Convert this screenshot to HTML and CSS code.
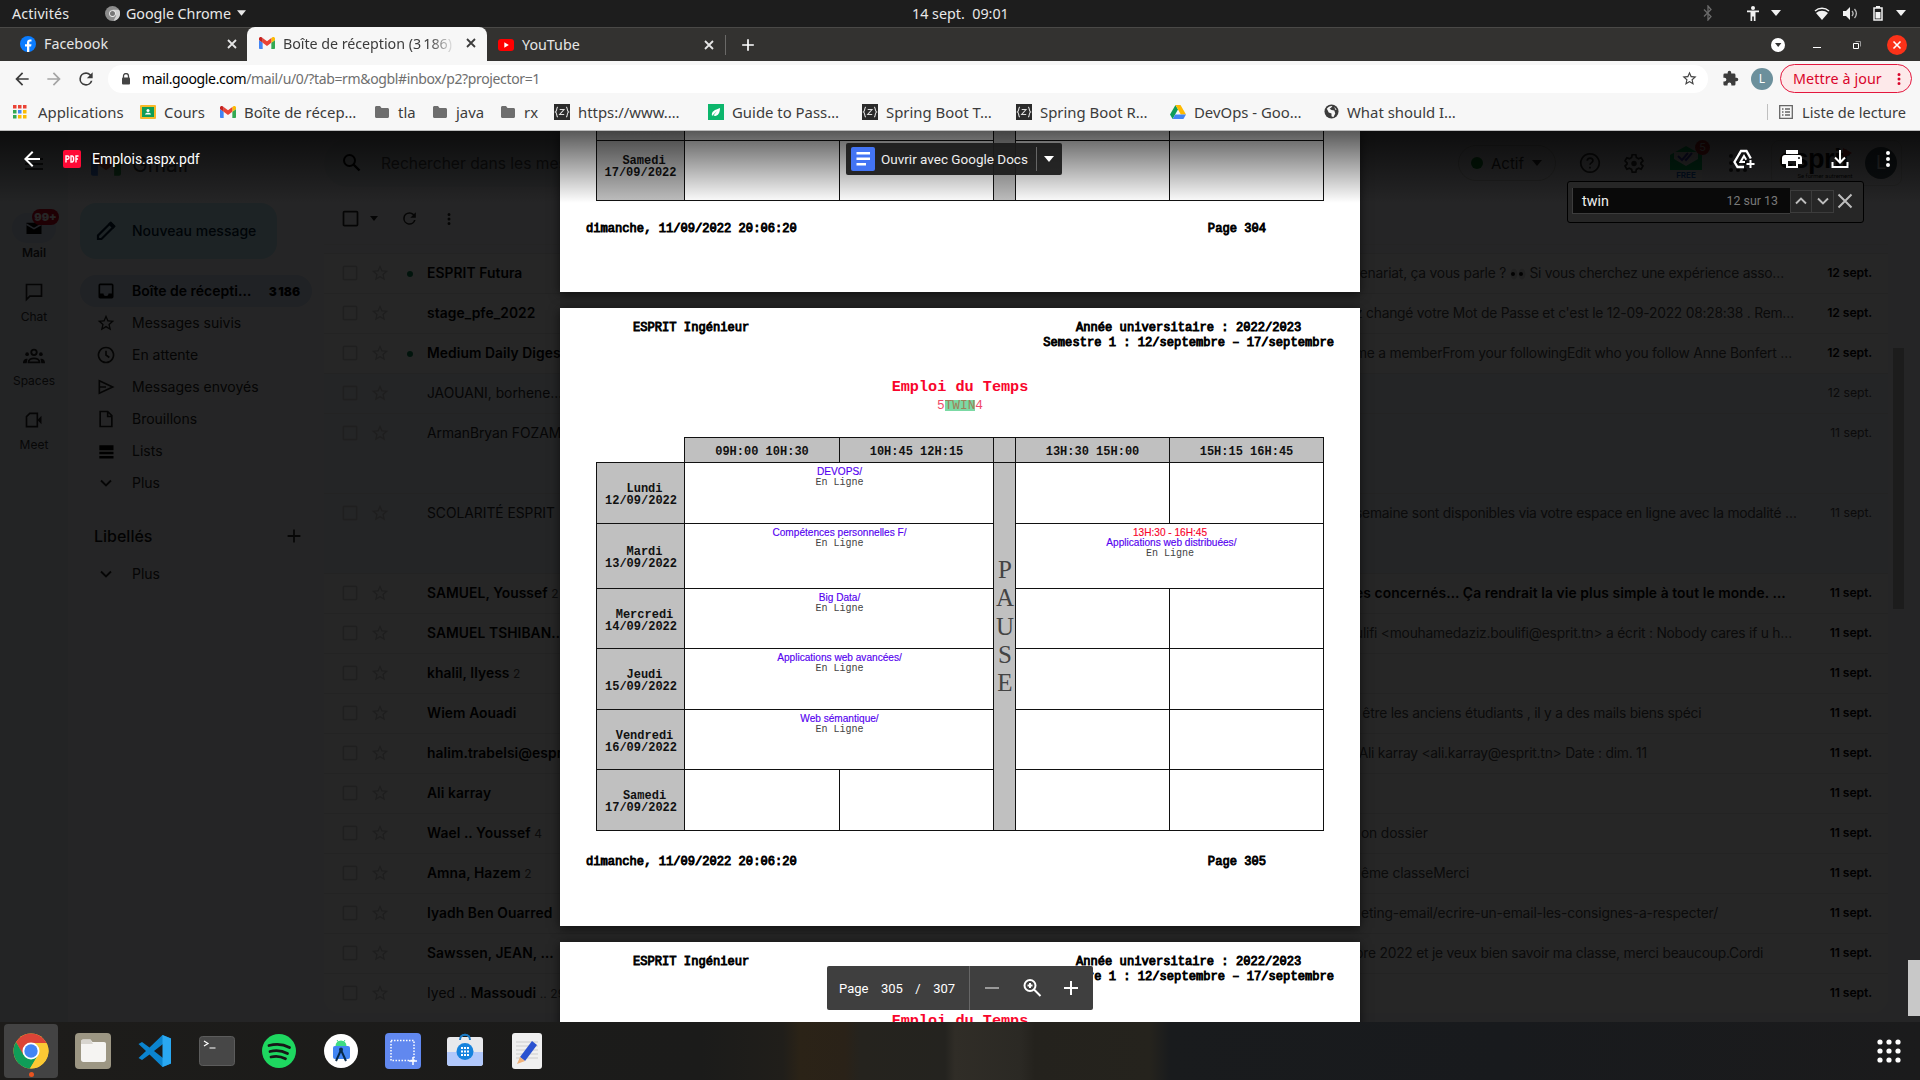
FILE: index.html
```html
<!DOCTYPE html>
<html lang="fr">
<head>
<meta charset="utf-8">
<title>Boîte de réception (3 186)</title>
<link rel="stylesheet" href="styles.css">
</head>
<body>
<svg class="sprite" width="0" height="0">
  <symbol id="gmail" viewBox="0 0 24 18"><path fill="#4285f4" d="M1.6 18H5.500V8.700L0 4.500v11.900C0 17.300.7 18 1.600 18z"/><path fill="#34a853" d="M18.500 18h3.900c.9 0 1.600-.7 1.600-1.600V4.500l-5.500 4.200z"/><path fill="#fbbc04" d="M18.500 1.600v7.100L24 4.500V2.400C24 .4 21.700-.7 20.100.5z"/><path fill="#ea4335" d="M5.500 8.700V1.600L12 6.500l6.500-4.900v7.100L12 13.600z"/><path fill="#c5221f" d="M0 2.400v2.100l5.500 4.200V1.600L3.900.5C2.300-.7 0 .4 0 2.400z"/></symbol>
  <symbol id="x" viewBox="0 0 16 16"><path d="M4 4l8 8M12 4l-8 8" fill="none" stroke="currentColor" stroke-width="1.8"/></symbol>
  <symbol id="folder" viewBox="0 0 16 16"><path fill="currentColor" d="M1 3.500C1 2.600 1.600 2 2.500 2H6l1.500 2h6c.9 0 1.500.6 1.500 1.500v7c0 .9-.6 1.500-1.500 1.500h-11C1.600 14 1 13.400 1 12.500z"/></symbol>
  <symbol id="zed" viewBox="0 0 16 16"><path fill="#2b2b2b" d="M0 0h16v16H0z"/><path d="M4 3C2 3 3.500 7 1.500 8 3.500 9 2 13 4 13M12 3c2 0 .5 4 2.500 5-2 1-.5 5-2.500 5M5.700 5.500h4.300l-4.300 5h4.500" fill="none" stroke="#ddd" stroke-width="1.100"/></symbol>
  <symbol id="caret" viewBox="0 0 10 6"><path fill="currentColor" d="M0 0h10L5 6z"/></symbol>
  <symbol id="arrow" viewBox="0 0 24 24"><path fill="currentColor" d="M20 11H7.830l5.590-5.590L12 4l-8 8 8 8 1.410-1.410L7.830 13H20v-2z"/></symbol>
  <symbol id="reload" viewBox="0 0 24 24"><path fill="currentColor" d="M17.650 6.350A7.950 7.950 0 0 0 12 4a8 8 0 1 0 7.730 10h-2.080A6 6 0 1 1 12 6c1.660 0 3.140.69 4.220 1.780L13 11h7V4z"/></symbol>
  <symbol id="star" viewBox="0 0 24 24"><path fill="currentColor" d="M22 9.240l-7.190-.62L12 2 9.190 8.630 2 9.240l5.460 4.730L5.820 21 12 17.270 18.180 21l-1.630-7.030zM12 15.400l-3.760 2.270 1-4.280-3.320-2.880 4.380-.38L12 6.100l1.710 4.040 4.380.38-3.320 2.880 1 4.280z"/></symbol>
  <symbol id="more" viewBox="0 0 24 24"><path fill="currentColor" d="M12 8a2 2 0 1 0 0-4 2 2 0 0 0 0 4zm0 2a2 2 0 1 0 0 4 2 2 0 0 0 0-4zm0 6a2 2 0 1 0 0 4 2 2 0 0 0 0-4z"/></symbol>
  <symbol id="box" viewBox="0 0 24 24"><path fill="currentColor" d="M19 5v14H5V5zm0-2H5a2 2 0 0 0-2 2v14c0 1.100.9 2 2 2h14a2 2 0 0 0 2-2V5a2 2 0 0 0-2-2z"/></symbol>
  <symbol id="down" viewBox="0 0 24 24"><path d="M6 9l6 6 6-6" fill="none" stroke="currentColor" stroke-width="2.300"/></symbol>
  <symbol id="plus" viewBox="0 0 24 24"><path d="M12 5v14M5 12h14" fill="none" stroke="currentColor" stroke-width="2"/></symbol>
</svg>

<header class="panel">
  <span class="activities">Activités</span>
  <span class="app-menu">
    <svg width="15" height="15" viewBox="0 0 16 16"><circle cx="8" cy="8" r="8" fill="#8c8c8c"/><path d="M8 4h7a8 8 0 0 1-6 12l3-6z" fill="#d0d0d0"/><circle cx="8" cy="8" r="3.600" fill="#eee"/><circle cx="8" cy="8" r="2.700" fill="#777"/></svg>
    Google Chrome <svg width="9" height="6"><use href="#caret"/></svg>
  </span>
  <span class="clock">14 sept.&nbsp; 09:01</span>
  <span class="indicators">
    <svg width="10" height="16" viewBox="0 0 10 16"><path d="M1 4.500l7 7L5 15V1l3 3.500-7 7" fill="none" stroke="#6b6b6b" stroke-width="1.300"/></svg>
    <svg class="i-access" width="12" height="15" viewBox="0 0 12 15"><circle cx="6" cy="2" r="2" fill="#f2f2f2"/><path fill="#f2f2f2" d="M0 4.500h12v1.700H8.500V15H6.800v-4.500H5.200V15H3.500V6.200H0z"/></svg>
    <svg class="i-c1" width="10" height="6"><use href="#caret"/></svg>
    <svg class="i-wifi" width="16" height="13" viewBox="0 0 16 13"><path d="M1 4a10.500 10.500 0 0 1 14 0" fill="none" stroke="#f2f2f2" stroke-width="1.500"/><path fill="#f2f2f2" d="M2 6a9 9 0 0 1 12 0l-6 7z"/></svg>
    <svg class="i-vol" width="15" height="13" viewBox="0 0 15 13"><path fill="#f2f2f2" d="M0 4h3l4-4v13L3 9H0z"/><path d="M9 4c1.300 1.500 1.300 3.500 0 5M11.500 2c2.500 3 2.500 6 0 9" fill="none" stroke="#bbb" stroke-width="1.300"/></svg>
    <svg class="i-bat" width="10" height="15" viewBox="0 0 10 15"><path d="M1 2h8v12H1z" fill="none" stroke="#f2f2f2" stroke-width="1.500"/><path fill="#f2f2f2" d="M3 0h4v2H3zM2.500 6h5v6.500h-5z"/></svg>
    <svg class="i-c2" width="10" height="6"><use href="#caret"/></svg>
  </span>
</header>

<nav class="tabs">
  <div class="tab tab-fb"><svg width="16" height="16" viewBox="0 0 16 16"><circle cx="8" cy="8" r="8" fill="#0a7cff"/><path fill="#fff" d="M7 16v-5.500H5V8.200h2V6.500C7 4.500 8.200 3.400 10 3.400l1.500.1v2h-1c-.9 0-1.200.5-1.200 1.200v1.500h2.200l-.4 2.300H9.300V16z"/></svg><span>Facebook</span><svg class="close" width="16" height="16"><use href="#x"/></svg></div>
  <div class="tab tab-active"><svg width="16" height="12"><use href="#gmail"/></svg><span>Boîte de réception (3&#8239;186)</span><svg class="close" width="16" height="16"><use href="#x"/></svg></div>
  <div class="tab tab-yt"><svg width="16" height="12" viewBox="0 0 16 12"><rect width="16" height="12" rx="3" fill="#f00"/><path fill="#fff" d="M6.300 3.300v5.400L10.800 6z"/></svg><span>YouTube</span><svg class="close" width="16" height="16"><use href="#x"/></svg></div>
  <svg class="newtab" width="20" height="20"><use href="#plus"/></svg>
  <div class="winctl">
    <svg width="14" height="14" viewBox="0 0 14 14"><circle cx="7" cy="7" r="7" fill="#fff"/><path d="M4 5h6.400L7.200 9z" fill="#333"/></svg>
    <svg width="8" height="14" viewBox="0 0 8 14"><path fill="#fff" d="M0 9h8v1H0z"/></svg>
    <svg width="8" height="8" viewBox="0 0 8 8"><path d="M.5 2.500h5v5h-5z" fill="none" stroke="#fff"/><path d="M2.500.5h5v5" fill="none" stroke="#999"/></svg>
    <svg width="20" height="20" viewBox="0 0 20 20"><circle cx="10" cy="10" r="10" fill="#fb3219"/><path d="M6.500 6.500l7 7M13.500 6.500l-7 7" stroke="#fff" stroke-width="1.600"/></svg>
  </div>
</nav>

<div class="toolbar">
  <div class="navbtns"><svg width="20" height="20"><use href="#arrow"/></svg><svg class="fwd" width="20" height="20"><use href="#arrow"/></svg><svg width="20" height="20"><use href="#reload"/></svg></div>
  <div class="omnibox"><svg width="10" height="12" viewBox="0 0 10 12"><path d="M2.500 5V3a2.500 2.500 0 0 1 5 0v2" fill="none" stroke="#444" stroke-width="1.300"/><rect x="1" y="4.500" width="8" height="7" rx="1" fill="#444"/></svg><span class="url">mail.google.com<i>/mail/u/0/?tab=rm&amp;ogbl#inbox/p2?projector=1</i></span><svg width="17" height="17"><use href="#star"/></svg></div>
  <svg class="ext" width="17" height="17" viewBox="0 0 24 24"><path fill="#3c3c3c" d="M20.500 11H19V7a2 2 0 0 0-2-2h-4V3.500a2.500 2.500 0 0 0-5 0V5H4a2 2 0 0 0-2 2v3.800h1.500a2.700 2.700 0 0 1 0 5.400H2V20c0 1.100.9 2 2 2h3.800v-1.500a2.700 2.700 0 0 1 5.400 0V22H17a2 2 0 0 0 2-2v-4h1.500a2.500 2.500 0 0 0 0-5z"/></svg>
  <span class="profile">L</span>
  <span class="update">Mettre à jour <svg width="18" height="20"><use href="#more"/></svg></span>
</div>

<div class="bookmarks">
  <span><svg width="14" height="14" viewBox="0 0 14 14"><path fill="#ea4335" d="M0 0h3.500v3.500H0zM5 0h3.500v3.500H5zM10 0h3.500v3.500H10z"/><path fill="#34a853" d="M0 5h3.500v3.500H0zM0 10h3.500v3.500H0z"/><path fill="#4285f4" d="M5 5h3.500v3.500H5z"/><path fill="#fbbc04" d="M10 5h3.500v3.500H10zM5 10h3.500v3.500H5zM10 10h3.500v3.500H10z"/></svg>Applications</span>
  <span><svg width="16" height="14" viewBox="0 0 16 14"><rect width="16" height="14" rx="1" fill="#f7b928"/><path fill="#0f9d58" d="M2 2h12v10H2z"/><circle cx="8" cy="5.500" r="1.500" fill="#fff"/><path fill="#fff" d="M5 9.500c0-2.200 6-2.200 6 0z"/></svg>Cours</span>
  <span><svg width="16" height="12"><use href="#gmail"/></svg>Boîte de récep…</span>
  <span><svg class="fold" width="16" height="16"><use href="#folder"/></svg>tla</span>
  <span><svg class="fold" width="16" height="16"><use href="#folder"/></svg>java</span>
  <span><svg class="fold" width="16" height="16"><use href="#folder"/></svg>rx</span>
  <span><svg width="16" height="16"><use href="#zed"/></svg>https://www.…</span>
  <span><svg width="16" height="16" viewBox="0 0 16 16"><path fill="#0cb66c" d="M0 0h16v16H0z"/><path fill="#fff" d="M4 12c-1-5 3-6 8-8 0 6-3 9-6.500 7.500L9 7z"/></svg>Guide to Pass…</span>
  <span><svg width="16" height="16"><use href="#zed"/></svg>Spring Boot T…</span>
  <span><svg width="16" height="16"><use href="#zed"/></svg>Spring Boot R…</span>
  <span><svg width="16" height="14" viewBox="0 0 16 14"><path fill="#0f9d58" d="M5.500 0L0 9.500 2.600 14 8 4.500z"/><path fill="#ffba00" d="M5.500 0h5L16 9.500h-5.200z"/><path fill="#4285f4" d="M2.600 14l2.700-4.500H16L13.400 14z"/></svg>DevOps - Goo…</span>
  <span><svg width="15" height="15" viewBox="0 0 16 16"><circle cx="8" cy="8" r="7.500" fill="#3c3c3c"/><path fill="#f7f7f7" d="M3 5c2-3 5-3 6-3L7.500 4 6 5l2 1.500 3 .5 1 3-2 4-2-1V10L5 9 4 7zM11 3l2.500 3L12 6z"/></svg>What should I…</span>
  <span class="readlist"><svg width="14" height="14" viewBox="0 0 14 14"><path d="M.7.700h12.600v12.600H.7z" fill="none" stroke="#666" stroke-width="1.300"/><path d="M3 4h1.500M3 7h1.500M3 10h1.500M6 4h5M6 7h5M6 10h5" stroke="#666" stroke-width="1.400"/></svg>Liste de lecture</span>
</div>

<main class="view">
  <div class="mail">
    <div class="rail">
      <div class="rail-item on"><span class="ic"><svg width="18" height="18" viewBox="0 0 24 24"><path fill="currentColor" d="M2 5h20v15H2z"/><path d="M2 7l10 6 10-6" fill="none" stroke="#d3e3fd" stroke-width="2"/></svg><b class="badge">99+</b></span>Mail</div>
      <div class="rail-item"><span class="ic"><svg width="20" height="20" viewBox="0 0 24 24"><path d="M3 21V3h18v14H7z" fill="none" stroke="currentColor" stroke-width="2"/></svg></span>Chat</div>
      <div class="rail-item"><span class="ic"><svg width="22" height="20" viewBox="0 0 24 20"><g fill="none" stroke="currentColor" stroke-width="2"><circle cx="12" cy="6" r="3"/><path d="M6 17c0-6 12-6 12 0z"/></g><circle cx="4.500" cy="8" r="2" fill="currentColor"/><circle cx="19.500" cy="8" r="2" fill="currentColor"/><path fill="currentColor" d="M0 18c0-3 1-5 5-5l-1 5zM24 18c0-3-1-5-5-5l1 5z"/></svg></span>Spaces</div>
      <div class="rail-item"><span class="ic"><svg width="20" height="20" viewBox="0 0 24 24"><path d="M3 8l4-4h9v16H3z" fill="none" stroke="currentColor" stroke-width="2"/><path fill="currentColor" d="M16 12l5-5v10z"/></svg></span>Meet</div>
    </div>

    <div class="side">
      <div class="brand"><svg class="burger" width="18" height="12"><path fill="#444" d="M0 0h18v2H0zM0 5h18v2H0zM0 10h18v2H0z"/></svg><svg width="30" height="23"><use href="#gmail"/></svg><span>Gmail</span></div>
      <div class="compose"><svg width="24" height="24" viewBox="0 0 24 24"><path d="M4 20v-3.500L16.500 4 20 7.500 7.500 20z" fill="none" stroke="currentColor" stroke-width="2.200"/><path fill="currentColor" d="M14 5l3-2.500L21.500 7 19 10z"/></svg>Nouveau message</div>
      <ul class="folders">
        <li class="on"><svg width="20" height="20" viewBox="0 0 24 24"><path fill="currentColor" d="M19 3H5a2 2 0 0 0-2 2v14c0 1.100.9 2 2 2h14a2 2 0 0 0 2-2V5a2 2 0 0 0-2-2zm0 12h-4a3 3 0 0 1-6 0H5V5h14z"/></svg><span>Boîte de récepti…</span><b>3&#8239;186</b></li>
        <li><svg width="20" height="20"><use href="#star"/></svg><span>Messages suivis</span></li>
        <li><svg width="20" height="20" viewBox="0 0 24 24"><path d="M12 3a9 9 0 1 0 .01 0zM12 7v5l4 3" fill="none" stroke="currentColor" stroke-width="2"/></svg><span>En attente</span></li>
        <li><svg width="20" height="20" viewBox="0 0 24 24"><path d="M4 4.500L20 12 4 19.500zM4 12h8" fill="none" stroke="currentColor" stroke-width="2"/></svg><span>Messages envoyés</span></li>
        <li><svg width="20" height="20" viewBox="0 0 24 24"><path d="M5 3h9l5 5v13H5zM14 3v6h5" fill="none" stroke="currentColor" stroke-width="2"/></svg><span>Brouillons</span></li>
        <li><svg width="20" height="20" viewBox="0 0 24 24"><path fill="#000" d="M4 5h17v6H4zM4 13h17v3H4zM4 18h17v3H4z"/></svg><span>Lists</span></li>
        <li><svg width="20" height="20"><use href="#down"/></svg><span>Plus</span></li>
      </ul>
      <div class="labels"><span>Libellés</span><svg width="22" height="22"><use href="#plus"/></svg></div>
      <ul class="folders"><li><svg width="20" height="20"><use href="#down"/></svg><span>Plus</span></li></ul>
    </div>

    <div class="content">
      <div class="topline">
        <div class="search"><svg width="24" height="24" viewBox="0 0 24 24"><circle cx="9.500" cy="9.500" r="5.500" fill="none" stroke="currentColor" stroke-width="2"/><path d="M13.500 13.500l6 6" stroke="currentColor" stroke-width="2.400"/></svg><span>Rechercher dans les messages</span></div>
        <div class="status"><i></i>Actif<svg width="10" height="6"><use href="#caret"/></svg></div>
        <svg class="help" width="22" height="22" viewBox="0 0 24 24"><path d="M12 2a10 10 0 1 0 .01 0zM9 9.500c0-4 6.200-3.500 6.200 0 0 2-3.200 2.200-3.200 4.500M12 16v2" fill="none" stroke="currentColor" stroke-width="1.900"/></svg>
        <svg class="gear" width="22" height="22" viewBox="0 0 24 24"><path d="M10 3h4l.6 3 2.400 1.300 2.800-1 2 3.400-2.200 2.100v1.400l2.200 2.100-2 3.400-2.800-1-2.400 1.300-.6 3h-4l-.6-3L7 17.700l-2.800 1-2-3.400 2.200-2.100v-1.400L2.200 9.700l2-3.400 2.800 1L9.400 6z" fill="none" stroke="currentColor" stroke-width="1.900"/><circle cx="12" cy="12.500" r="3" fill="currentColor"/></svg>
        <div class="tracker"><svg width="32" height="24" viewBox="0 0 32 24"><path fill="#0c6" d="M0 9L16 0l16 9v15H0z"/><path fill="#fff" d="M4 6h24v7l-12 7-12-7z"/><path d="M8 10l4 4 6-7M15 13l1 1 6-7" fill="none" stroke="#44c" stroke-width="2"/></svg><b>FREE</b><em>5</em></div>
        <svg class="apps" width="20" height="20" viewBox="0 0 20 20"><g fill="currentColor"><circle cx="3" cy="3" r="2"/><circle cx="10" cy="3" r="2"/><circle cx="17" cy="3" r="2"/><circle cx="3" cy="10" r="2"/><circle cx="10" cy="10" r="2"/><circle cx="17" cy="10" r="2"/><circle cx="3" cy="17" r="2"/><circle cx="10" cy="17" r="2"/><circle cx="17" cy="17" r="2"/></g></svg>
        <div class="org"><span class="logo">esprit<s></s><small>Se former autrement</small></span><span class="me">L</span></div>
      </div>
      <div class="listbar"><svg width="21" height="21"><use href="#box"/></svg><svg class="c" width="8" height="5"><use href="#caret"/></svg><svg class="r" width="19" height="19"><use href="#reload"/></svg><svg class="m" width="18" height="18"><use href="#more"/></svg><span>51–100 sur 1577</span></div>
      <div class="rows">
        <div class="row new"><svg class="k"><use href="#box"/></svg><svg class="s"><use href="#star"/></svg><i></i><b>ESPRIT Futura</b><p>renariat, ça vous parle ? <svg width="16" height="12" viewBox="0 0 16 12"><ellipse cx="4" cy="6" rx="3.500" ry="5.500" fill="#ddd"/><ellipse cx="12" cy="6" rx="3.500" ry="5.500" fill="#ddd"/><circle cx="3" cy="6" r="2" fill="#111"/><circle cx="11" cy="6" r="2" fill="#111"/></svg> Si vous cherchez une expérience asso…</p><time>12 sept.</time></div>
        <div class="row"><svg class="k"><use href="#box"/></svg><svg class="s"><use href="#star"/></svg><i></i><b>stage_pfe_2022</b><p>z changé votre Mot de Passe et c'est le 12-09-2022 08:28:38 . Rem…</p><time>12 sept.</time></div>
        <div class="row new"><svg class="k"><use href="#box"/></svg><svg class="s"><use href="#star"/></svg><i></i><b>Medium Daily Digest</b><p>me a memberFrom your followingEdit who you follow Anne Bonfert …</p><time>12 sept.</time></div>
        <div class="row read"><svg class="k"><use href="#box"/></svg><svg class="s"><use href="#star"/></svg><i></i><b>JAOUANI, borhene…</b><p></p><time>12 sept.</time></div>
        <div class="row read tall"><svg class="k"><use href="#box"/></svg><svg class="s"><use href="#star"/></svg><i></i><b>ArmanBryan FOZAM…</b><p></p><time>11 sept.</time></div>
        <div class="row read tall"><svg class="k"><use href="#box"/></svg><svg class="s"><use href="#star"/></svg><i></i><b>SCOLARITÉ ESPRIT</b><p>semaine sont disponibles via votre espace en ligne avec la modalité …</p><time>11 sept.</time></div>
        <div class="row"><svg class="k"><use href="#box"/></svg><svg class="s"><use href="#star"/></svg><i></i><b>SAMUEL, Youssef <u>2</u></b><p class="strong">es concernés… Ça rendrait la vie plus simple à tout le monde. …</p><time>11 sept.</time></div>
        <div class="row"><svg class="k"><use href="#box"/></svg><svg class="s"><use href="#star"/></svg><i></i><b>SAMUEL TSHIBAN…</b><p>ulifi &lt;mouhamedaziz.boulifi@esprit.tn&gt; a écrit : Nobody cares if u h…</p><time>11 sept.</time></div>
        <div class="row"><svg class="k"><use href="#box"/></svg><svg class="s"><use href="#star"/></svg><i></i><b>khalil, Ilyess <u>2</u></b><p></p><time>11 sept.</time></div>
        <div class="row"><svg class="k"><use href="#box"/></svg><svg class="s"><use href="#star"/></svg><i></i><b>Wiem Aouadi</b><p>&nbsp; être les anciens étudiants , il y a des mails biens spéci</p><time>11 sept.</time></div>
        <div class="row"><svg class="k"><use href="#box"/></svg><svg class="s"><use href="#star"/></svg><i></i><b>halim.trabelsi@esprit</b><p>&nbsp;Ali karray &lt;ali.karray@esprit.tn&gt; Date : dim. 11</p><time>11 sept.</time></div>
        <div class="row"><svg class="k"><use href="#box"/></svg><svg class="s"><use href="#star"/></svg><i></i><b>Ali karray</b><p></p><time>11 sept.</time></div>
        <div class="row"><svg class="k"><use href="#box"/></svg><svg class="s"><use href="#star"/></svg><i></i><b>Wael .. Youssef <u>4</u></b><p class="in">on dossier</p><time>11 sept.</time></div>
        <div class="row"><svg class="k"><use href="#box"/></svg><svg class="s"><use href="#star"/></svg><i></i><b>Amna, Hazem <u>2</u></b><p class="in">ême classeMerci</p><time>11 sept.</time></div>
        <div class="row"><svg class="k"><use href="#box"/></svg><svg class="s"><use href="#star"/></svg><i></i><b>Iyadh Ben Ouarred</b><p class="in">eting-email/ecrire-un-email-les-consignes-a-respecter/</p><time>11 sept.</time></div>
        <div class="row"><svg class="k"><use href="#box"/></svg><svg class="s"><use href="#star"/></svg><i></i><b>Sawssen, JEAN, …</b><p>bre 2022 et je veux bien savoir ma classe, merci beaucoup.Cordi</p><time>11 sept.</time></div>
        <div class="row"><svg class="k"><use href="#box"/></svg><svg class="s"><use href="#star"/></svg><i></i><b><span>Iyed ..</span> Massoudi <u>.. 29</u></b><p></p><time>11 sept.</time></div>
      </div>
    </div>
    <div class="innerscroll"></div>
    <div class="scrim"></div>
  </div>

  <div class="viewer">
    <div class="pages">
      <section class="page first">
        <div class="grid stub">
          <div class="day"></div><div class="w2"></div><div class="pause"></div><div></div><div></div>
          <div class="day"><span>Samedi</span>17/09/2022</div><div></div><div></div><div></div><div></div>
        </div>
        <footer><span>dimanche, 11/09/2022 20:06:20</span><span>Page 304</span></footer>
      </section>
      <section class="page">
        <header><span>ESPRIT Ingénieur</span><span class="year">Année universitaire : 2022/2023<br>Semestre 1 : 12/septembre – 17/septembre</span></header>
        <h1>Emploi du Temps</h1>
        <h2>5<mark>TWIN</mark>4</h2>
        <div class="grid full">
          <div class="none"></div><div class="hr">09H:00 10H:30</div><div class="hr">10H:45 12H:15</div><div class="hr"></div><div class="hr">13H:30 15H:00</div><div class="hr">15H:15 16H:45</div>
          <div class="day"><span>Lundi</span>12/09/2022</div><div class="w2"><a>DEVOPS/</a>En Ligne</div><div class="pause">P<br>A<br>U<br>S<br>E</div><div></div><div></div>
          <div class="day"><span>Mardi</span>13/09/2022</div><div class="w2"><a>Compétences personnelles F/</a>En Ligne</div><div class="w2"><em>13H:30 - 16H:45</em><a>&nbsp;Applications web distribuées/</a>En Ligne</div>
          <div class="day"><span>Mercredi</span>14/09/2022</div><div class="w2"><a>Big Data/</a>En Ligne</div><div></div><div></div>
          <div class="day"><span>Jeudi</span>15/09/2022</div><div class="w2"><a>Applications web avancées/</a>En Ligne</div><div></div><div></div>
          <div class="day"><span>Vendredi</span>16/09/2022</div><div class="w2"><a>Web sémantique/</a>En Ligne</div><div></div><div></div>
          <div class="day"><span>Samedi</span>17/09/2022</div><div></div><div></div><div></div><div></div>
        </div>
        <footer><span>dimanche, 11/09/2022 20:06:20</span><span>Page 305</span></footer>
      </section>
      <section class="page">
        <header><span>ESPRIT Ingénieur</span><span class="year">Année universitaire : 2022/2023<br>Semestre 1 : 12/septembre – 17/septembre</span></header>
        <h1>Emploi du Temps</h1>
      </section>
    </div>

    <div class="vhead">
      <svg class="back" width="24" height="24"><use href="#arrow"/></svg>
      <svg class="pdf" width="18" height="18" viewBox="0 0 18 18"><rect width="18" height="18" rx="2" fill="#ff0a36"/><path d="M3 12.500V6h1.500c2 0 2 3.200 0 3.200H3M8 6v6h1c2.200 0 2.200-6 0-6zM13 12.500V6h2.500M13 9h2" fill="none" stroke="#fff" stroke-width="1.400"/></svg>
      <span class="fname">Emplois.aspx.pdf</span>
      <div class="acts">
        <svg width="24" height="24" viewBox="0 0 24 24"><path d="M12 20H5.500L2.500 15 9 4h5.500l4.300 7.500" fill="none" stroke="#fff" stroke-width="2.300"/><path d="M13 15H8.500L12 9l2.200 3.700M18.500 13v8M14.500 17h8" fill="none" stroke="#fff" stroke-width="2"/></svg>
        <svg width="24" height="24" viewBox="0 0 24 24"><path fill="#fff" d="M19 8H5c-1.700 0-3 1.300-3 3v6h4v4h12v-4h4v-6c0-1.700-1.300-3-3-3zm-3 11H8v-5h8zm3-7a1 1 0 1 1 0-2 1 1 0 0 1 0 2zM18 3H6v4h12z"/></svg>
        <svg width="24" height="24" viewBox="0 0 24 24"><path d="M12 3v12M7 10.500l5 5 5-5M4.500 15v5h15v-5" fill="none" stroke="#fff" stroke-width="2"/></svg>
        <svg width="24" height="24"><use href="#more"/></svg>
      </div>
    </div>

    <div class="openwith">
      <svg width="24" height="24" viewBox="0 0 24 24"><rect width="24" height="24" rx="2" fill="#4374f4"/><path fill="#fff" d="M5.500 5H19v2.500H5.500zM5.500 10.500H19V13H5.500zM5.500 16H15v2.500H5.500z"/></svg>
      <span>Ouvrir avec Google Docs</span><svg class="car" width="10" height="6"><use href="#caret"/></svg>
    </div>

    <div class="find">
      <div class="field"><span>twin</span><span class="cnt">12 sur 13</span></div>
      <span class="fb"><svg class="up" width="20" height="20"><use href="#down"/></svg></span><span class="fb"><svg width="20" height="20"><use href="#down"/></svg></span>
      <svg class="fx" width="16" height="16" viewBox="0 0 16 16"><path d="M1.500 1.500l13 13M14.500 1.500l-13 13" stroke="#bdbdbd" stroke-width="2"/></svg>
    </div>

    <div class="pager">
      <div class="pg"><span>Page</span><span>305</span><span>/</span><span>307</span></div>
      <div class="zm"><svg width="14" height="2"><path fill="#999" d="M0 0h14v2H0z"/></svg>
      <svg width="20" height="20" viewBox="0 0 20 20"><circle cx="8" cy="7.500" r="5.500" fill="none" stroke="#fff" stroke-width="2"/><path d="M12 11.500l6.500 6.500M8 5v5M5.500 7.500h5" stroke="#fff" stroke-width="2"/></svg>
      <svg width="14" height="14"><path fill="#fff" d="M6 0h2v14H6zM0 6h14v2H0z"/></svg></div>
    </div>
    <div class="outerscroll"></div>
  </div>
</main>

<footer class="dock">
  <div class="app on"><svg width="36" height="36" viewBox="0 0 36 36"><circle cx="18" cy="18" r="17.500" fill="#fbc934"/><path fill="#db4437" d="M18 18h16.800L33 9A17.500 17.500 0 0 0 3 9l7 13z"/><path fill="#0f9d58" d="M3 9a17.500 17.500 0 0 0 14 26.500L26 21l-8-2-7.500 3z"/><path fill="#fbc934" d="M18 10h15.500A17.500 17.500 0 0 1 17 35.500L25.500 21z"/><circle cx="18" cy="18" r="8.500" fill="#fff"/><circle cx="18" cy="18" r="6.700" fill="#4285f4"/></svg></div>
  <div class="app"><svg width="36" height="36" viewBox="0 0 36 36"><rect width="36" height="36" rx="4" fill="#9c9683"/><path fill="#f5f4f2" d="M6 9c0-1.500 1-2.500 2.500-2.500h7L17.500 9H29c1.300 0 2 .8 2 2v15.500c0 1.600-1 2.500-2.500 2.500h-20C7 29 6 28 6 26.500z"/><path fill="#d8d5cf" d="M6 11V8.500C6 7 7 6.500 8 6.500h7.500L18 11z"/></svg></div>
  <div class="app"><svg width="36" height="36" viewBox="0 0 36 36"><path fill="#0b84cf" d="M25.500 2L34 5.500v25L25.500 34 12.500 21.500 5 27l-3.500-2L9 18 1.500 11 5 9l7.500 5.500z"/><path fill="#1b1b1b" d="M26 11v14l-9-7z"/><path fill="#2aa8f2" d="M25.500 2L34 5.500v25L25.500 34z"/></svg></div>
  <div class="app"><svg width="36" height="30" viewBox="0 0 36 30"><rect x=".5" y=".5" width="35" height="29" rx="3" fill="#474747" stroke="#5c5c5c"/><path d="M5 5l4 2.500L5 10M10.500 12h6" fill="none" stroke="#fff" stroke-width="1.200"/></svg></div>
  <div class="app"><svg width="34" height="36" viewBox="0 0 34 34"><circle cx="17" cy="17" r="17" fill="#1ed760"/><path d="M7 11.500c7-2 14.500-1.300 20.500 2M8 17.500c6-1.700 12-1 17.500 2M9 23c5-1.300 10-.6 14.500 1.700" fill="none" stroke="#171717" stroke-width="2.800" stroke-linecap="round"/></svg></div>
  <div class="app"><svg width="34" height="36" viewBox="0 0 34 34"><circle cx="17" cy="17" r="17" fill="#fff"/><rect x="9" y="12" width="17" height="13" rx="2" fill="#4285f4"/><path fill="#3ddc84" d="M11.500 12a5.500 5.500 0 0 1 11 0z"/><path d="M13 6l1.500 2M21 6l-1.500 2" stroke="#3ddc84"/><path d="M17 16l-5 11M17 16l5 11" fill="none" stroke="#082a4a" stroke-width="2"/><circle cx="17" cy="15.500" r="2" fill="#082a4a"/></svg></div>
  <div class="app"><svg width="36" height="36" viewBox="0 0 36 36"><rect width="36" height="36" rx="4" fill="#6188ef"/><path d="M6 7.500h23v20H6z" fill="none" stroke="#fff" stroke-width="1.500" stroke-dasharray="1.500 1.500"/><path d="M28 24v8M24 28h8" stroke="#fff" stroke-width="1.500"/></svg></div>
  <div class="app"><svg width="36" height="36" viewBox="0 0 36 36"><path d="M13 7c0-7 10-7 10 0" fill="none" stroke="#1a78c2" stroke-width="2"/><rect y="4" width="36" height="29" rx="3" fill="#e8e9ec"/><path fill="#b1c8fb" d="M0 19h36v11c0 2-1 3-3 3H3c-2 0-3-1-3-3z"/><circle cx="18" cy="18.500" r="8.500" fill="#1683dd"/><path d="M14 15h8M14 18.500h8M14 22h8" stroke="#fff" stroke-width="2" stroke-dasharray="2 1"/><path d="M13 7c0-7 10-7 10 0" fill="none" stroke="#1a78c2" stroke-width="2"/></svg></div>
  <div class="app"><svg width="30" height="36" viewBox="0 0 30 36"><rect width="30" height="36" rx="3" fill="#f0f0f0"/><path d="M4 9h22M4 13h22M4 17h22M4 21h22M4 25h22" stroke="#ccc"/><path fill="#2a52d0" d="M20 8l5 4-12 16-5-4z"/><path fill="#f1b27a" d="M8 24l5 4-8 3z"/></svg></div>
  <svg class="grid9" width="24" height="24" viewBox="0 0 24 24"><g fill="#fff"><circle cx="3" cy="3" r="2.600"/><circle cx="12" cy="3" r="2.600"/><circle cx="21" cy="3" r="2.600"/><circle cx="3" cy="12" r="2.600"/><circle cx="12" cy="12" r="2.600"/><circle cx="21" cy="12" r="2.600"/><circle cx="3" cy="21" r="2.600"/><circle cx="12" cy="21" r="2.600"/><circle cx="21" cy="21" r="2.600"/></g></svg>
</footer>
</body>
</html>
```
FILE: styles.css
```css
* { box-sizing: border-box; }
body {
  margin: 0; width: 1920px; height: 1080px; overflow: hidden;
  display: grid; grid-template-rows: 27px 34px 34px 36px 891px 58px;
  font: 14.3px "Noto Sans", sans-serif; background: #1b1b1b;
}
svg { display: block; flex: none; }
.sprite { position: absolute; }
ul { margin: 0; padding: 0; list-style: none; }

/* GNOME panel */
.panel { background: #1d1d1d; color: #e8e8e8; display: grid; grid-template-columns: 105px 806px 780px 229px; align-items: center; white-space: nowrap; padding-bottom: 1px; }
.activities { padding-left: 12px; letter-spacing: .15px; }
.app-menu { display: flex; align-items: center; gap: 6px; letter-spacing: -.05px; }
.clock { padding-left: 1px; }
.indicators { display: flex; align-items: center; color: #f2f2f2; margin-left: 12px; }
.i-access { margin-left: 34px; } .i-c1 { margin-left: 12px; } .i-wifi { margin-left: 33px; }
.i-vol { margin-left: 13px; } .i-bat { margin-left: 15px; } .i-c2 { margin-left: 13px; }

/* Tab strip */
.tabs { background: #333230; border-top: 1px solid #4a4947; display: flex; color: #e6e6e6; align-items: center; }
.tab { display: flex; align-items: center; gap: 8px; height: 34px; white-space: nowrap; padding-bottom: 2px !important; }
.tab .close { margin-left: auto; }
.tab-fb { width: 247px; padding: 0 7px 0 20px; }
.tab-active { position: relative; width: 240px; padding: 0 8px 0 12px; background: #f7f7f7; color: #3c3c3c; border-radius: 8px 8px 0 0; align-self: flex-start; margin-top: -1px; }
.tab-active span { width: 174px; overflow: hidden; -webkit-mask-image: linear-gradient(90deg, #000 85%, transparent); letter-spacing: -.05px; }
.tab-yt { width: 239px; padding: 0 8px 0 11px; border-right: 1px solid #6a6967; height: 20px; padding-bottom: 0 !important; }
.newtab { margin-left: 12px; color: #fff; }
.winctl { display: flex; align-items: center; margin-left: auto; padding-right: 13px; gap: 26px; }
.winctl svg:nth-child(1) { margin-right: 2px; } .winctl svg:nth-child(2) { margin-right: 6px; }

/* Address bar */
.toolbar { background: #f7f7f7; display: flex; align-items: center; padding: 1px 0 0 12px; height: 34px; }
.navbtns { display: flex; gap: 12px; color: #3c3c3c; width: 96px; }
.navbtns svg { height: 20px; } .fwd { transform: scaleX(-1); color: #a5a5a5; }
.omnibox { width: 1600px; height: 28px; border-radius: 14px; background: #fff; display: flex; align-items: center; padding: 0 10px 0 13px; color: #444; }
.url { color: #000; margin-left: 11px; flex: 1; white-space: nowrap; font-size: 14px; letter-spacing: -.36px; }
.url i { font-style: normal; color: #6f6f6f; }
.ext { margin-left: 14px; }
.profile { width: 22px; height: 22px; border-radius: 50%; background: #6c909c; color: #fff; font-size: 12px; line-height: 22px; text-align: center; margin-left: 12px; }
.update { margin-left: 7px; width: 132px; height: 29px; border: 1px solid #e3173e; border-radius: 15px; background: #fde9ea; color: #d9042b; display: flex; align-items: center; justify-content: space-between; padding: 0 3px 0 12px; white-space: nowrap; letter-spacing: .1px; }

/* Bookmarks bar */
.bookmarks { background: #f7f7f7; border-bottom: 1px solid #bcbcbc; color: #3c3c3c; display: grid; grid-template-columns: 127px 80px 154px 58px 68px 54px 154px 154px 154px 154px 154px 443px 1fr; padding: 0 0 2px 13px; align-items: center; white-space: nowrap; font-size: 14.9px; }
.bookmarks span { display: flex; align-items: center; gap: 8px; }
.bookmarks span:first-child { gap: 11px; }
.bookmarks .fold { color: #6e6e6e; }
.bookmarks .readlist { border-left: 1px solid #c0c0c0; padding-left: 11px; height: 16px; gap: 9px; font-size: 14.6px; }

/* Webmail underneath the viewer */
.view { position: relative; overflow: hidden; }
.mail { position: relative; height: 891px; display: grid; grid-template-columns: 68px 256px 1564px 1fr; background: #f9f9fa; font: 14px Inter, sans-serif; color: #222; }
.scrim { position: absolute; inset: 0; background: rgba(0,0,0,.85); }
.rail { background: #e8eef7; padding-top: 82px; font-size: 12px; color: #333; }
.rail-item { height: 64px; display: flex; flex-direction: column; align-items: center; gap: 2px; line-height: 16px; }
.rail-item .ic { width: 44px; height: 30px; border-radius: 15px; display: grid; place-items: center; position: relative; color: #222; }
.rail-item.on { font-weight: 600; }
.rail-item.on .ic { background: #d3e0f6; color: #000; }
.badge { position: absolute; left: 20px; top: -4px; background: #d0021b; color: #fff; border-radius: 8px; font-size: 11px; line-height: 16px; width: 27px; text-align: center; }
.brand { height: 72px; display: flex; align-items: center; font-size: 21px; color: #444; gap: 11px; padding-bottom: 6px; }
.brand .burger { margin-left: -43px; margin-right: 37px; }
.compose { margin-left: 12px; width: 197px; height: 56px; border-radius: 16px; background: #c2e7f4; display: flex; align-items: center; gap: 14px; padding-left: 14px; font-weight: 500; color: #001d35; line-height: 16px; }
.folders li { height: 32px; display: flex; align-items: center; gap: 16px; padding-left: 16px; margin: 0 12px; }
.folders li span { padding-bottom: 1px; }
.folders { color: #222; }
.compose + .folders { margin-top: 16px; }
.folders .on { background: #d3e0f8; border-radius: 16px; color: #000; font-weight: 600; }
.folders b { margin-left: auto; font-size: 12px; padding-right: 12px; letter-spacing: -.2px; }
.labels { display: flex; justify-content: space-between; align-items: center; font-size: 16px; font-weight: 500; padding: 0 19px 0 26px; height: 42px; margin: 16px 0 1px; color: #111; }
.labels svg { color: #333; }

.topline { height: 64px; display: flex; align-items: center; }
.topline > * { flex: none; }
.search { width: 722px; height: 48px; background: #e9eff8; border-radius: 24px; display: flex; align-items: center; padding-left: 16px; gap: 17px; font-size: 15.6px; color: #555; }
.search svg { color: #000; }
.status { margin-left: 412px; width: 98px; height: 36px; border: 1px solid #ccc; border-radius: 18px; display: flex; align-items: center; padding-left: 12px; gap: 8px; font-size: 15px; color: #333; }
.status i { width: 12px; height: 12px; border-radius: 6px; background: #0a8a2a; }
.help { margin-left: 23px; } .gear { margin-left: 22px; }
.help, .gear, .apps { color: #333; }
.tracker { position: relative; width: 32px; margin-left: 25px; text-align: center; }
.tracker b { display: block; font-size: 8px; color: #16c; background: #fff; line-height: 11px; }
.tracker em { position: absolute; right: -8px; top: -6px; width: 15px; height: 15px; border-radius: 8px; background: #d22; color: #fff; font: 11px/15px Inter, sans-serif; }
.apps { margin-left: 26px; }
.org { margin-left: 23px; width: 131px; height: 46px; border: 1px solid #ddd; border-radius: 8px; display: flex; align-items: center; justify-content: space-between; padding: 0 4px 0 7px; }
.logo { position: relative; font: bold 27px/26px "Liberation Sans", sans-serif; color: #111; padding-bottom: 8px; letter-spacing: -.5px; }
.logo s { position: absolute; right: -7px; top: 2px; border: 5px solid transparent; border-left: 9px solid #d22; }
.logo small { position: absolute; right: -3px; bottom: 0; font: 6px/8px Roboto, sans-serif; letter-spacing: 0; white-space: nowrap; }
.me { width: 32px; height: 32px; border-radius: 16px; background: #455a64; color: #fff; text-align: center; font-size: 18px; line-height: 32px; }
.listbar { height: 50px; margin-bottom: 8px; display: flex; align-items: center; padding-left: 16px; padding-bottom: 2px; border-bottom: 1px solid #f0f0f0; color: #222; }
.listbar .c { margin-left: 9px; } .listbar .r { margin-left: 27px; margin-left: 22px; } .listbar .m { margin-left: 21px; }
.listbar span { margin-left: 1243px; font-size: 12px; }
.row { display: grid; grid-template-columns: 30px 30px 27px 928px 433px 84px; height: 40px; padding: 0 0 0 16px; border-top: 1px solid #ebebeb; line-height: 38px; white-space: nowrap; color: #222; font-size: 13.8px; }
.row { background: #fff; }
.row svg.k, .row svg.s { width: 20px; height: 20px; margin-top: 9px; color: #d2d2d2; }
.row svg.s { color: #c8c8c8; }
.row i { width: 6px; height: 6px; border-radius: 3px; margin: 17px 7px; }
.row.new i { background: #0a8754; }
.row b { font-weight: 600; color: #000; letter-spacing: .08px; }
.row u { text-decoration: none; font-weight: 400; font-size: 12px; color: #555; }
.row b span { font-weight: 400; color: #222; }
.row p { margin: 0; color: #4a4a4a; letter-spacing: -.22px; }
.row p.in { padding-left: 6px; letter-spacing: -.15px; }
.row p svg { display: inline-block; vertical-align: -2px; }
.row p.strong { color: #000; font-weight: 600; letter-spacing: .1px; }
.row time { text-align: right; font-size: 12.2px; font-weight: 600; color: #000; letter-spacing: -.1px; }
.row.read { background: #f0f3fa; }
.row.read b, .row.read time { font-weight: 400; color: #2a2a2a; letter-spacing: 0; }
.row.read time { color: #4a4a4a; }
.row.tall { height: 80px; }
.rows { border-radius: 0 0 16px 16px; overflow: hidden; }
.innerscroll { width: 11px; height: 261px; margin: 217px 0 0 5px; background: #bcbcbc; }

/* Document viewer */
.viewer { position: absolute; inset: 0; }
.pages { display: flex; flex-direction: column; align-items: center; gap: 16px; }
.page { width: 800px; height: 618px; flex: none; background: #fff; box-shadow: 0 2px 10px rgba(0,0,0,.6); color: #000; font: 12.12px/15px "Liberation Mono", monospace; display: flex; flex-direction: column; }
.page.first { height: 161px; }
.page header { display: flex; justify-content: space-between; padding: 13px 26px 0 73px; -webkit-text-stroke: .9px #000; }
.page .year { text-align: center; }
.page h1 { margin: 27px 0 0; text-align: center; font-size: 15.2px; line-height: 18px; color: #f8052c; }
.page h2 { margin: 1px 0 0; text-align: center; font: 12.8px/18px "Liberation Mono", monospace; color: #f04a68; }
.page mark { background: #7bd9a4; color: #a0805a; display: inline-block; line-height: 11px; }
.page footer { display: flex; justify-content: space-between; padding: 0 94px 0 26px; margin-top: 23px; line-height: 16px; -webkit-text-stroke: .9px #000; }
.page.first footer { margin-top: 20px; }
.grid { display: grid; grid-template-columns: 88px 155px 154px 22px 154px 154px; margin-left: 36px; width: 728px; border: solid #111; border-width: 0 1px 1px 0; }
.grid > div { border: solid #111; border-width: 1px 0 0 1px; font-size: 10.05px; line-height: 10.4px; text-align: center; color: #444; padding: 4px 0 0 1px; }
.grid .w2 { grid-column: span 2; }
.grid > .day { background: #c0c0c0; font-size: 12px; line-height: 11.6px; font-weight: bold; color: #111; display: flex; flex-direction: column; justify-content: center; padding-top: 6px; }
.day span { padding-left: 7px; }
.grid > .hr { background: #c0c0c0; font-size: 12px; line-height: 22px; font-weight: bold; color: #111; padding: 3px 0 0; }
.grid > .pause { background: #c0c0c0; grid-row: 2 / 8; grid-column: 4; font: 25px/28.3px "Liberation Serif", serif; color: #444; padding-top: 93px; }
.grid a, .grid em { display: block; font: 10.1px/10.4px "Liberation Sans", sans-serif; color: #5500f0; -webkit-text-stroke: .15px #5500f0; }
.grid a { padding-bottom: 1px; line-height: 10px; }
.grid em { color: #f8052c; -webkit-text-stroke-color: #f8052c; }
.full { grid-template-rows: 25px 61px 65px 60px 61px 60px 61px; height: 394px; margin-top: 22px; }
.grid > .none { border: 0; }
.stub { grid-template-rows: 9px 60px; height: 70px; }
.stub > div:nth-child(-n+5) { border-top: 0; padding: 0; }
.grid.stub > .pause { grid-row: 1 / 3; }
.stub > .day:nth-child(6) { padding: 0 0 5px; }

.vhead { position: absolute; left: 0; right: 0; top: 0; height: 72px; padding-bottom: 16px; background: linear-gradient(rgba(0,0,0,.65), transparent); display: flex; align-items: center; color: #fff; font: 14px Roboto, sans-serif; }
.back { margin-left: 20px; } .pdf { margin-left: 19px; } .fname { margin-left: 11px; }
.acts { margin-left: auto; padding-right: 20px; display: flex; gap: 24px; }
.openwith { position: absolute; left: 846px; top: 12px; width: 216px; height: 32px; border-radius: 2px; background: rgba(28,28,28,.94); display: flex; align-items: center; padding-left: 5px; color: #eee; font: 13.5px Roboto, sans-serif; gap: 6px; white-space: nowrap; }
.openwith span { border-right: 1px solid #666; line-height: 24px; width: 156px; }
.openwith .car { color: #fff; margin-left: 1px; }
.find { position: absolute; left: 1567px; top: 50px; width: 297px; height: 42px; border: 1px solid #000; border-radius: 3px; background: #262626; display: flex; align-items: center; padding-left: 4px; padding-bottom: 2px; }
.field { width: 218px; height: 26px; border: 1px solid #3c3c3c; border-width: 0 0 1px 1px; background: #090909; display: flex; justify-content: space-between; align-items: center; padding: 0 12px 0 9px; font: 14.3px Roboto, sans-serif; color: #eee; }
.cnt { color: #7a7a7a; font-size: 12.4px; }
.fb { width: 22px; height: 23px; border: 1px solid #3c3c3c; display: grid; place-items: center; color: #bdbdbd; }
.fb + .fb { border-left: 0; }
.up { transform: rotate(180deg); } .fx { margin-left: 3px; }
.pager { position: absolute; left: 827px; top: 835px; width: 266px; height: 44px; border-radius: 2px; background: #3f3f3f; display: flex; color: #fff; font: 13px Roboto, sans-serif; }
.pg { width: 143px; border-right: 1px solid #666; display: flex; align-items: center; padding-left: 12px; gap: 12.5px; }
.zm { flex: 1; display: flex; align-items: center; justify-content: space-between; padding: 0 15px; }
.outerscroll { position: absolute; left: 1908px; top: 829px; width: 12px; height: 56px; background: #c8c8c8; }

/* Dock */
.dock { display: flex; align-items: center; padding-left: 4px; gap: 8px; background: linear-gradient(90deg, #1d1c1a 0, #1b1b1a 700px, #201e1a 783px, #2b2317 800px, #2a2218 845px, #25231e 860px, #24231f 945px, #302d27 955px, #2b2924 1020px, #24221d 1035px, #25231d 1150px, #191b1d 1170px, #181a1d 1500px, #1b1b1c 1920px); }
.app { position: relative; width: 54px; height: 54px; display: grid; place-items: center; }
.app.on { background: #434343; border-radius: 4px; }
.app.on::after { content: ""; position: absolute; bottom: 1px; left: 25px; width: 5px; height: 5px; border-radius: 3px; background: #e95420; }
.grid9 { margin-left: auto; margin-right: 19px; }
```
